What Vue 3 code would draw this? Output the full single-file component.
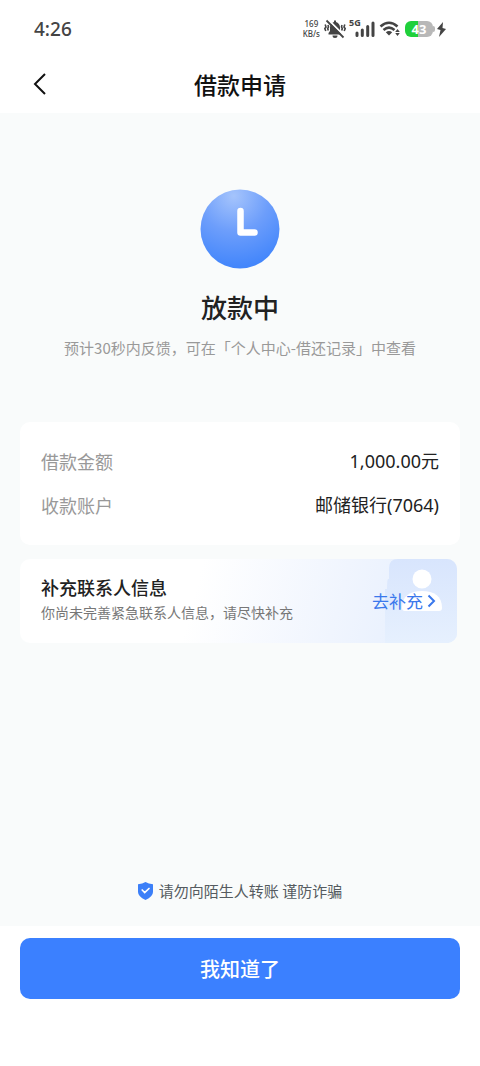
<script setup>
const rows = [
  { label: '借款金额', value: '1,000.00元' },
  { label: '收款账户', value: '邮储银行(7064)' },
]
</script>

<template>
  <div class="page">
    <div class="status">
      <span class="time">4:26</span>
      <div class="indicators">
        <span class="speed"><span>169</span><span>KB/s</span></span>
        <svg class="bell" width="22" height="20" viewBox="0 0 22 20" aria-hidden="true">
          <path d="M4.500 15.500V14L6 12V8.500C6 5.600 7.700 3.600 10 3V1.500h2V3c2.300.6 4 2.600 4 5.500V12l1.500 2v1.500Z" fill="#444" />
          <path d="M8.500 16.500h5a2.500 2.500 0 0 1-5 0Z" fill="#444" />
          <path d="M4.500 1 21 17.500" stroke="#fff" stroke-width="1.800" />
          <path d="M2.500 1.500 19.500 18.500" stroke="#444" stroke-width="1.800" />
          <path d="M1.200 5.500 2 8 .8 9.500l1 2.500M4 6l.5 2-.8 1.500.6 2M20.800 5.500 20 8l1.200 1.500-1 2.500M18 6l-.5 2 .8 1.500-.6 2" fill="none" stroke="#444" stroke-width="1.600" />
        </svg>
        <span class="cell">
          <span class="gen">5G</span>
          <svg width="20" height="16" viewBox="0 0 20 16" aria-hidden="true">
            <path d="M2 12v2.500M7.300 9v5.500M12.700 5.500v9M18 2V14.500" stroke="#444" stroke-width="3" stroke-linecap="round" />
          </svg>
        </span>
        <svg class="wifi" width="22" height="18" viewBox="0 0 22 18" aria-hidden="true">
          <path d="M1.500 6.500Q10 -1 18.500 6.500M4.500 10Q10 5.200 15.500 10" fill="none" stroke="#444" stroke-width="2.600" />
          <path d="M6.800 12.300Q10 9.600 13.200 12.300L10 15.500Z" fill="#444" />
          <path d="m18.500 9 2.300 3h-4.600ZM18.500 16l2.300-3h-4.600Z" fill="#444" />
        </svg>
        <span class="battery">43</span>
        <svg class="bolt" width="9" height="15" viewBox="0 0 9 15" aria-hidden="true">
          <path d="M6 0 0 7l3.500 1L2 15l7-8-3.500-1Z" fill="#444" />
        </svg>
      </div>
    </div>

    <header class="nav">
      <button class="back" type="button" aria-label="返回">
        <svg width="14" height="22" viewBox="0 0 14 22" aria-hidden="true">
          <path d="M12 1 2 11l10 10" fill="none" stroke="#111" stroke-width="2" />
        </svg>
      </button>
      <h1>借款申请</h1>
    </header>

    <main class="content">
      <section class="result">
        <svg width="80" height="80" viewBox="0 0 80 80" aria-hidden="true">
          <defs>
            <radialGradient id="clock-face" cx="0.42" cy="0.08" r="0.9">
              <stop offset="0" stop-color="#a5c4fc" />
              <stop offset="0.5" stop-color="#6d9efb" />
              <stop offset="1" stop-color="#4386fb" />
            </radialGradient>
          </defs>
          <circle cx="40" cy="40" r="39.500" fill="url(#clock-face)" />
          <path d="M40.500 22v21.500h14" fill="none" stroke="#fff" stroke-width="6.500" stroke-linecap="round" stroke-linejoin="round" />
        </svg>
        <h2>放款中</h2>
        <p>预计30秒内反馈&#xFF0C;可在「个人中心-借还记录」中查看</p>
      </section>

      <dl class="card">
        <div v-for="row in rows" :key="row.label" class="row">
          <dt>{{ row.label }}</dt>
          <dd>{{ row.value }}</dd>
        </div>
      </dl>

      <section class="contact">
        <svg class="person" width="72" height="84" viewBox="0 0 72 84" aria-hidden="true">
          <defs>
            <linearGradient id="tile" x1="0" y1="0" x2="0" y2="1">
              <stop offset="0" stop-color="#d8e5fd" />
              <stop offset="1" stop-color="#e6f0fe" />
            </linearGradient>
          </defs>
          <path d="M13 0H72V84H0V30H2Q2 21 3 20H4V9Q4 0 13 0Z" fill="url(#tile)" />
          <circle cx="37" cy="20" r="9.500" fill="#fff" />
          <path d="M17 49C17 37 25 32 37 32s20 5 20 17q0 3-3 3H20q-3 0-3-3Z" fill="#fff" />
        </svg>
        <div class="copy">
          <h3>补充联系人信息</h3>
          <p>你尚未完善紧急联系人信息&#xFF0C;请尽快补充</p>
        </div>
        <a class="go" href="#">去补充
          <svg width="9" height="14" viewBox="0 0 9 14" aria-hidden="true">
            <path d="m1.500 1.500 5.500 5.500-5.500 5.500" fill="none" stroke="#3a78ec" stroke-width="2" />
          </svg>
        </a>
      </section>

      <p class="notice">
        <svg width="15" height="18" viewBox="0 0 15 18" aria-hidden="true">
          <path d="M7.500 0Q10.500 2 15 2.300V10q0 4.500-7.500 8Q0 14.500 0 10V2.300Q4.500 2 7.500 0Z" fill="#3c7ff8" />
          <path d="m4.200 8 2.500 2.500 4.300-4" fill="none" stroke="#fff" stroke-width="1.700" stroke-linecap="round" />
        </svg>
        <span>请勿向陌生人转账 谨防诈骗</span>
      </p>
    </main>

    <footer class="actions">
      <button type="button">我知道了</button>
    </footer>
  </div>
</template>

<style>
body {
  margin: 0;
  background: #fff;
}
</style>

<style scoped>
.page {
  display: flex;
  flex-direction: column;
  min-height: 100vh;
  font-family: "Noto Sans CJK SC", sans-serif;
  color: #222;
  background: #fff;
}
h1, h2, h3, p, dl, dd {
  margin: 0;
}
button {
  border: 0;
  padding: 0;
  font-family: inherit;
  cursor: pointer;
}
svg {
  display: block;
  flex: none;
}
.status {
  display: flex;
  align-items: center;
  justify-content: space-between;
  height: 58px;
  padding: 0 34px;
}
.time {
  font: 500 19px/24px "Noto Sans", sans-serif;
  color: #444;
}
.indicators {
  display: flex;
  align-items: center;
  gap: 4px;
}
.speed {
  display: flex;
  flex-direction: column;
  align-items: center;
  font: 500 8px/10px "Noto Sans", sans-serif;
  color: #444;
}
.cell {
  display: flex;
  align-items: flex-end;
  position: relative;
  padding-left: 5px;
}
.gen {
  position: absolute;
  left: -1px;
  top: -3px;
  font: 700 9px/10px "Noto Sans", sans-serif;
  color: #444;
}
.battery {
  position: relative;
  width: 28px;
  border-radius: 6px;
  text-align: center;
  font: 700 13px/16px "Noto Sans", sans-serif;
  color: #fff;
  background: linear-gradient(90deg, #20d03b 45%, #b8b8b8 45%);
}
.battery::after {
  content: "";
  position: absolute;
  left: 100%;
  top: 5px;
  width: 2px;
  height: 6px;
  border-radius: 0 2px 2px 0;
  background: #b8b8b8;
}
.nav {
  display: grid;
  grid-template-columns: 48px 1fr 48px;
  align-items: center;
  height: 55px;
  padding: 0 16px 4px;
  box-sizing: border-box;
}
.back {
  display: flex;
  align-items: center;
  justify-content: center;
  height: 44px;
  background: none;
}
h1 {
  text-align: center;
  font-size: 23px;
  line-height: 32px;
  font-weight: 500;
  color: #111;
}
.content {
  display: flex;
  flex: 1;
  flex-direction: column;
  padding: 76px 20px 24px;
  background: #f9fbfb;
}
.result {
  display: flex;
  flex-direction: column;
  align-items: center;
}
h2 {
  margin-top: 20px;
  font-size: 26px;
  line-height: 36px;
  font-weight: 500;
}
.result p {
  margin-top: 12px;
  font-size: 15px;
  line-height: 22px;
  color: #999;
  white-space: nowrap;
}
.card {
  display: grid;
  gap: 16px;
  margin-top: 63px;
  padding: 25px 21px 26px;
  border-radius: 10px;
  background: #fff;
}
.row {
  display: flex;
  justify-content: space-between;
  font-size: 18px;
  line-height: 28px;
}
dt {
  color: #999;
}
dd {
  font-family: "Noto Sans", "Noto Sans CJK SC", sans-serif;
}
.contact {
  position: relative;
  display: flex;
  align-items: center;
  justify-content: space-between;
  height: 84px;
  margin: 14px 3px 0 0;
  padding: 0 21px;
  box-sizing: border-box;
  border-radius: 10px;
  overflow: hidden;
  background: linear-gradient(105deg, #fff 40%, #f0f5fe 72%, #e3edfe 100%);
}
.person {
  position: absolute;
  right: 0;
  top: 0;
}
.copy, .go {
  position: relative;
}
.copy {
  padding-bottom: 4px;
}
h3 {
  font-size: 18px;
  line-height: 26px;
  font-weight: 500;
}
.copy p {
  font-size: 14px;
  line-height: 24px;
  color: #777;
}
.go {
  display: flex;
  align-items: center;
  gap: 4px;
  font-size: 17px;
  line-height: 24px;
  color: #3a78ec;
  text-decoration: none;
}
.notice {
  display: flex;
  align-items: center;
  justify-content: center;
  gap: 6px;
  margin-top: auto;
  font-size: 15px;
  line-height: 22px;
  color: #555b60;
}
.actions {
  padding: 12px 20px 67px;
}
.actions button {
  width: 100%;
  height: 61px;
  border-radius: 10px;
  font-size: 20px;
  font-weight: 500;
  color: #fff;
  background: #3b80ff;
}
</style>
